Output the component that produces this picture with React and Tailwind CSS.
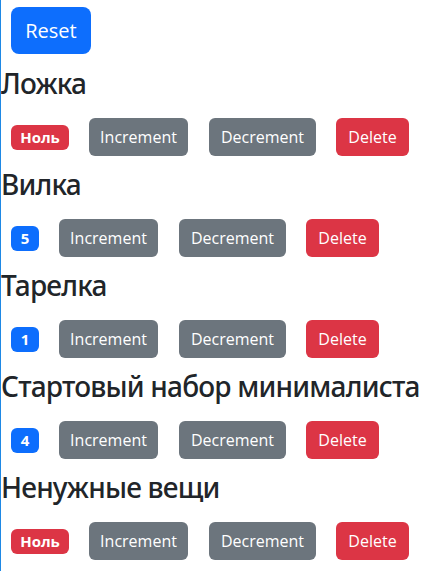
const items = [
  { id: 1, name: 'Ложка', value: 0 },
  { id: 2, name: 'Вилка', value: 5 },
  { id: 3, name: 'Тарелка', value: 1 },
  { id: 4, name: 'Стартовый набор минималиста', value: 4 },
  { id: 5, name: 'Ненужные вещи', value: 0 },
];

const font = { fontFamily: '"Open Sans", "Noto Sans", sans-serif' };
const headFont = { fontFamily: '"Noto Sans", "Open Sans", sans-serif' };

function Counter({ name, value }) {
  const zero = value === 0;
  return (
    <div>
      <h3 className="text-[28px] leading-[34px] font-medium text-[#212529] mb-2 whitespace-nowrap tracking-[-0.8px]" style={headFont}>{name}</h3>
      <div className="flex items-center gap-5 pl-[10px] pt-[10px] pb-[11px]">
        <span
          className={[
            'h-[25px] flex items-center justify-center rounded-md text-white font-bold text-[15px] leading-none',
            zero ? 'w-[58px] bg-[#dc3545]' : 'w-[28px] bg-[#0d6efd]',
          ].join(' ')}
        >
          {zero ? 'Ноль' : value}
        </span>
        <button className="h-[38px] w-[99px] rounded-md bg-[#6c757d] text-white text-[16px]">Increment</button>
        <button className="h-[38px] w-[107px] ml-[1px] rounded-md bg-[#6c757d] text-white text-[16px]">Decrement</button>
        <button className="h-[38px] w-[73px] rounded-md bg-[#dc3545] text-white text-[16px]">Delete</button>
      </div>
    </div>
  );
}

export default function App() {
  return (
    <div className="min-h-[571px] bg-white border-l border-[#1e88e5] overflow-hidden" style={font}>
      <div className="pt-[7px] pl-[10px] pb-[12px]">
        <button className="h-[47px] w-[80px] rounded-lg bg-[#0d6efd] text-white text-[20px]">Reset</button>
      </div>
      {items.map((it) => (
        <Counter key={it.id} name={it.name} value={it.value} />
      ))}
    </div>
  );
}
